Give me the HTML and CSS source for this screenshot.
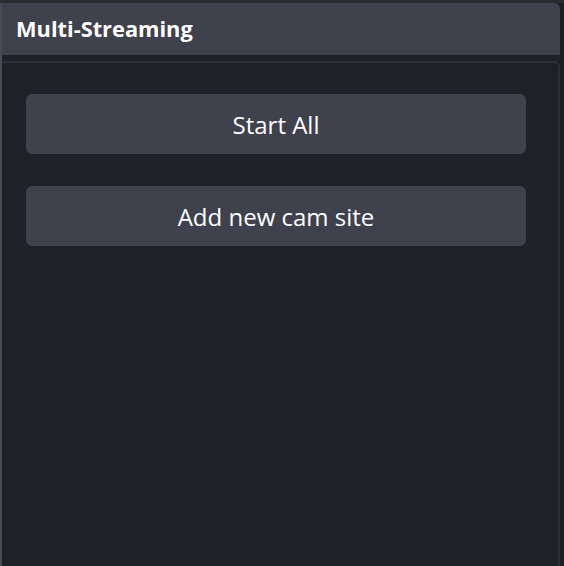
FILE: index.html
```html
<!DOCTYPE html>
<html>
<head>
<meta charset="utf-8">
<link rel="stylesheet" href="styles.css">
</head>
<body>
<div class="topline"></div>
<div class="frame">
  <div class="panel">
    <div class="header">Multi-Streaming</div>
    <div class="content">
      <div class="inner">
        <button class="btn">Start All</button>
        <button class="btn">Add new cam site</button>
      </div>
    </div>
  </div>
  <div class="edge"></div>
</div>
</body>
</html>
```

FILE: styles.css
```css
html, body {
  margin: 0;
  padding: 0;
  width: 564px;
  height: 566px;
  overflow: hidden;
  background: #1f2129;
  font-family: "Open Sans", "Noto Sans", sans-serif;
}
.topline {
  height: 3px;
  background: #2a2b2f;
}
.frame {
  display: flex;
  height: 563px;
}
.panel {
  width: 560px;
  display: flex;
  flex-direction: column;
  border-left: 2px solid #484a55;
  box-sizing: border-box;
}
.header {
  height: 52px;
  background: #3f414d;
  border-top-right-radius: 6px;
  color: #ffffff;
  font-weight: 700;
  font-size: 21.8px;
  line-height: 52px;
  padding-left: 14px;
  flex-shrink: 0;
}
.content {
  flex: 1;
  background: #1f2129;
  padding-top: 6px;
}
.inner {
  height: 100%;
  box-sizing: border-box;
  border-top: 2px solid #2b2e37;
  border-right: 2px solid #2b2e37;
  border-top-right-radius: 6px;
  padding: 31px 30px 0 24px;
  display: flex;
  flex-direction: column;
  gap: 32px;
}
.btn {
  height: 60px;
  width: 500px;
  border: none;
  border-radius: 6px;
  background: #3f414d;
  color: #ffffff;
  font-family: "Open Sans", "Noto Sans", sans-serif;
  font-size: 24px;
  padding: 0;
}
.edge {
  width: 4px;
  background: #1c1e25;
}
```
